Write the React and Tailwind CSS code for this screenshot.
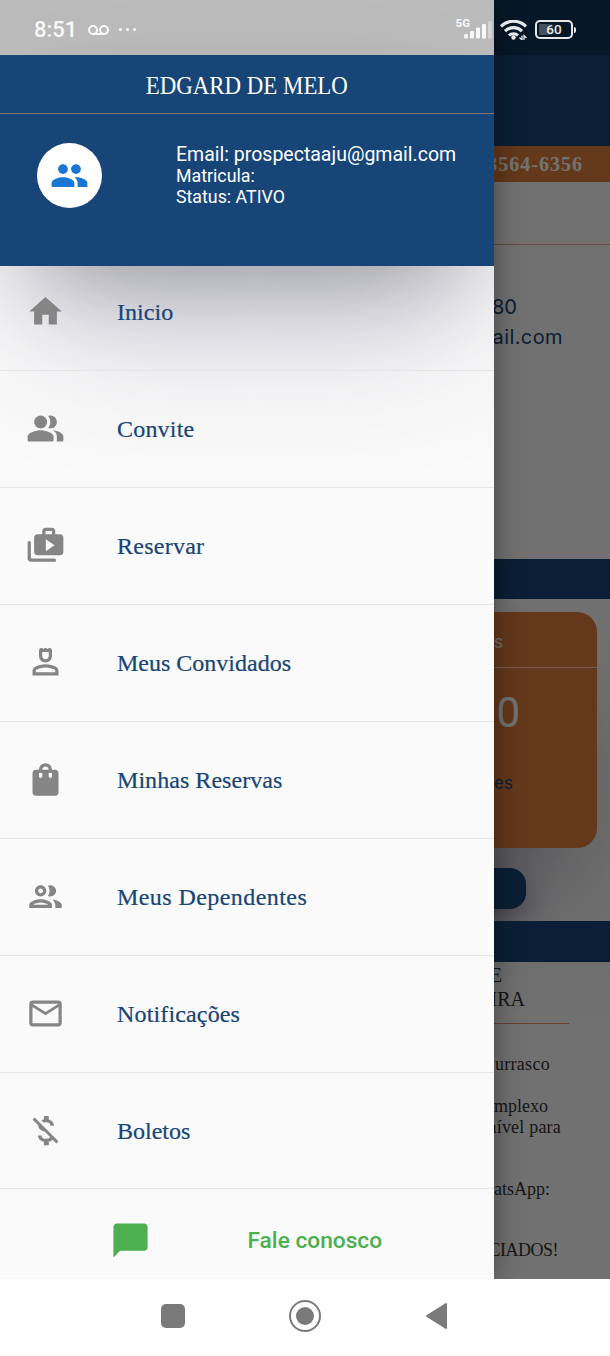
import React from 'react';
import {
  MdChatBubble,
  MdHome,
  MdMailOutline,
  MdMoneyOff,
  MdOutlinePeople,
  MdOutlinePerson4,
  MdPeople,
  MdShoppingBag,
} from 'react-icons/md';

// Rounded variants that the icon package doesn't ship
const PeopleRoundIcon = (props) => (
  <svg viewBox="0 0 24 24" fill="currentColor" {...props}>
    <circle cx="9" cy="8" r="4" />
    <path d="M16.67 13.13C18.04 14.06 19 15.32 19 17v2c0 .35-.07.69-.18 1H22c.55 0 1-.45 1-1v-2c0-2.18-3.57-3.47-6.33-3.87z" />
    <path d="M15 12c2.21 0 4-1.79 4-4s-1.79-4-4-4c-.47 0-.91.1-1.33.24a5.98 5.98 0 0 1 0 7.52c.42.14.86.24 1.33.24z" />
    <path d="M9 13c-2.67 0-8 1.34-8 4v2c0 .55.45 1 1 1h14c.55 0 1-.45 1-1v-2c0-2.66-5.33-4-8-4z" />
  </svg>
);

const ShopTwoIcon = (props) => (
  <svg viewBox="0 0 24 24" fill="currentColor" {...props}>
    <path d="M2 9.2c-.55 0-1 .45-1 1V20c0 1.1.9 2 2 2h14.5c.55 0 1-.45 1-1s-.45-1-1-1H4c-.55 0-1-.45-1-1v-8.8c0-.55-.45-1-1-1z" />
    <path
      fillRule="evenodd"
      d="M18 5V3c0-1.1-.9-2-2-2h-4c-1.1 0-2 .9-2 2v2H7c-1.1 0-2 .9-2 2v9c0 1.1.9 2 2 2h14c1.1 0 2-.9 2-2V7c0-1.1-.9-2-2-2h-3zM12 3h4v2h-4V3zM12.2 8.2v7.3l5.3-3.65-5.3-3.65z"
    />
  </svg>
);

const menuItems = [
  { label: 'Inicio', Icon: MdHome, tracking: 'tracking-[0.05px]' },
  { label: 'Convite', Icon: PeopleRoundIcon, tracking: 'tracking-[0.2px]' },
  { label: 'Reservar', Icon: ShopTwoIcon, tracking: 'tracking-[0.25px]' },
  { label: 'Meus Convidados', Icon: MdOutlinePerson4, tracking: 'tracking-normal' },
  { label: 'Minhas Reservas', Icon: MdShoppingBag, tracking: 'tracking-[0.05px]' },
  { label: 'Meus Dependentes', Icon: MdOutlinePeople, tracking: 'tracking-[0.43px]' },
  { label: 'Notificações', Icon: MdMailOutline, tracking: 'tracking-[0.15px]' },
  { label: 'Boletos', Icon: MdMoneyOff, tracking: 'tracking-normal' },
];

const StatusBar = () => (
  <div className="absolute inset-x-0 top-0 z-20 flex h-[55px] items-center bg-black/25 pt-1 pr-[34px] pl-[34px] text-white/90">
    <span className="font-['Roboto',sans-serif] text-[22px] font-medium">8:51</span>
    <svg className="ml-[11px] h-3 w-[21px]" viewBox="0 0 21 12" fill="none" stroke="currentColor" strokeWidth="2">
      <circle cx="5" cy="6" r="4" />
      <circle cx="16" cy="6" r="4" />
      <path d="M5 10h11" />
    </svg>
    <div className="ml-[10px] flex gap-1">
      <i className="h-[3px] w-[3px] rounded-full bg-white/90" />
      <i className="h-[3px] w-[3px] rounded-full bg-white/90" />
      <i className="h-[3px] w-[3px] rounded-full bg-white/90" />
    </div>

    <div className="ml-auto flex items-center">
      <span className="-mt-[12px] font-['Roboto',sans-serif] text-[11.5px] leading-none font-bold">5G</span>
      <svg className="-ml-[6px] h-[18px] w-[28px]" viewBox="0 0 28 18" fill="currentColor">
        <rect x="0" y="13" width="4" height="4.5" rx="1.5" />
        <rect x="6" y="10" width="4" height="7.5" rx="1" />
        <rect x="12" y="6.5" width="4" height="11" rx="1" />
        <rect x="18" y="3" width="4" height="14.5" rx="1" />
        <rect x="24" y="0" width="4" height="17.5" rx="1" opacity="0.4" />
      </svg>
      <svg className="ml-2 h-5 w-[27px]" viewBox="0 0 27 20" fill="none" stroke="currentColor" strokeWidth="3.1">
        <path d="M1 6.500a17.500 17.500 0 0 1 25 0" />
        <path d="M5 11.200a12 12 0 0 1 17 0" />
        <path d="M9 15.500a6.500 6.500 0 0 1 9 0" />
        <circle cx="13.5" cy="17.5" r="2.2" fill="currentColor" stroke="none" />
        <path d="M22 15.500v4.500l-2.500-2.500M24 20v-4.500l2.500 2.500" strokeWidth="1.3" />
      </svg>
      <div className="ml-2 flex items-center">
        <div className="flex h-[19px] w-[38px] items-center justify-center rounded-[5px] border-2 border-white/90 bg-[linear-gradient(90deg,#47515d_25%,transparent_55%)] bg-clip-content p-[2px] font-['Roboto',sans-serif] text-[13.5px] leading-none font-medium">
          60
        </div>
        <i className="ml-px h-[6px] w-[2px] rounded-r bg-white/90" />
      </div>
    </div>
  </div>
);

// Home screen that stays behind the open drawer
const HomeScreen = () => (
  <div className="flex h-full flex-col overflow-hidden bg-[#fafafa] text-right font-['Liberation_Serif',serif]">
    <div className="h-[146px] shrink-0 bg-[#184577]" />
    <div className="h-9 shrink-0 bg-[#dd7d3c] pr-[27px] text-xl leading-9 font-bold tracking-[1px] text-white">
      3564-6356
    </div>
    <div className="h-[63px] shrink-0 border-b border-[#dd7d3c]/70" />
    <div className="h-[314px] shrink-0 pt-[47px] font-['Inter',sans-serif] text-xl leading-[30px] text-[#184577]">
      <p className="pr-[93px]">80</p>
      <p className="pr-[47px] tracking-[0.4px]">gmail.com</p>
    </div>
    <div className="h-10 shrink-0 bg-[#184577]" />

    <div className="flex h-[322px] shrink-0 flex-col items-end pt-[13px] pr-[13px]">
      <div className="h-[236px] w-[280px] rounded-[20px] bg-[#dd7d3c] shadow-[0_78px_155px_-31px_rgba(50,50,93,0.25),0_47px_93px_-47px_rgba(0,0,0,0.3)]">
        <p className="h-14 border-b border-white/70 pr-[94px] font-['Inter',sans-serif] text-[17px] leading-[61px] text-white">s</p>
        <p className="pt-[21px] pr-[77px] font-['Roboto',sans-serif] text-[42px] leading-[48px] text-white">0</p>
        <p className="pt-[34px] pr-[84px] font-['Inter',sans-serif] text-[17px] leading-6 text-[#184577]">es</p>
      </div>
      <div className="mt-5 mr-[71px] h-[41px] w-[180px] rounded-[16px] bg-[#184577] shadow-[0_10px_30px_rgba(50,50,93,0.5)]" />
    </div>
    <div className="h-[41px] shrink-0 bg-[#184577]" />

    <div className="h-[61px] shrink-0 pt-px text-xl leading-6 text-[#333]">
      <p className="pr-[108px]">E</p>
      <p className="pr-[85px]">IRA</p>
    </div>
    <div className="mr-[41px] h-px w-[420px] shrink-0 self-end bg-[#dd7d3c]/80" />
    <div className="text-lg leading-[21px] text-[#333]">
      <p className="mt-[30px] pr-[60px] tracking-[0.3px]">churrasco</p>
      <p className="mt-[21px] pr-[62px]">complexo</p>
      <p className="pr-[49px] tracking-[0.2px]">disponível para</p>
      <p className="mt-[41px] pr-[60px]">WhatsApp:</p>
      <p className="mt-[40px] pr-[52px] tracking-[-0.5px]">ASSOCIADOS!</p>
    </div>
  </div>
);

const DrawerHeader = () => (
  <div className="relative z-10 h-[211px] shrink-0 bg-[#184577] text-white shadow-[0_78px_155px_-31px_rgba(50,50,93,0.28),0_47px_93px_-38px_rgba(0,0,0,0.3)]">
    <div className="flex h-[59px] items-center justify-center border-b border-[#85766b] pt-[3px]">
      <span className="inline-block scale-x-[0.88] font-['Liberation_Serif',serif] text-[26px] whitespace-nowrap">
        EDGARD DE MELO
      </span>
    </div>
    <div className="flex items-start pt-[29px] pl-[37px]">
      <div className="flex h-[65px] w-[65px] items-center justify-center rounded-full bg-white text-[#1976d2]">
        <MdPeople className="h-[39px] w-[39px]" />
      </div>
      <div className="ml-[74px] font-['Roboto',sans-serif] text-[17.8px] leading-[21.5px] whitespace-nowrap">
        <p className="pt-px -mb-px text-[19.5px]">Email: prospectaaju@gmail.com</p>
        <p>Matricula:</p>
        <p>Status: ATIVO</p>
      </div>
    </div>
  </div>
);

const MenuRow = ({ label, Icon, tracking }) => (
  <li className="flex h-[117px] shrink-0 items-center border-b border-[#e6e6e6] pl-[26px] first:h-[105px] first:pb-3 last:h-[116px]">
    <Icon className="-mt-px h-[39px] w-[39px] text-[#858585]" />
    <span
      className={`ml-[52px] font-['Liberation_Serif',serif] text-[24px] text-[#184577] [-webkit-text-stroke:0.22px_#184577] ${tracking}`}
    >
      {label}
    </span>
  </li>
);

const Drawer = () => (
  <div className="absolute inset-y-0 left-0 z-10 w-[494px] shadow-[0_0_28px_rgba(0,0,0,0.4)]">
    <div className="flex h-full flex-col overflow-hidden bg-[#fafafa] pt-[55px]">
      <DrawerHeader />
      <ul className="relative z-10 flex flex-col">
        {menuItems.map((item) => (
          <MenuRow key={item.label} {...item} />
        ))}
      </ul>
      <div className="flex h-[90px] items-center pt-[14px] pl-[110px] text-[#4caf50]">
        <MdChatBubble className="-mt-[2px] h-[41px] w-[41px]" />
        <span className="ml-[96.5px] font-['Roboto',sans-serif] text-[22.7px] font-medium">Fale conosco</span>
      </div>
    </div>
  </div>
);

const NavigationBar = () => (
  <div className="flex h-[77px] items-center bg-white pb-1 pl-[161px] text-[#7a7a7a]">
    <div className="h-6 w-6 rounded-[5px] bg-[#7a7a7a]" />
    <div className="ml-[104px] flex h-8 w-8 items-center justify-center rounded-full border-[2.5px] border-[#7a7a7a]">
      <div className="h-[18px] w-[18px] rounded-full bg-[#7a7a7a]" />
    </div>
    <svg className="ml-[104px] h-7 w-[23px]" viewBox="0 0 23 28" fill="currentColor" stroke="currentColor" strokeWidth="2" strokeLinejoin="round">
      <path d="M2 14 21 2v24z" />
    </svg>
  </div>
);

const App = () => (
  <div className="flex h-[1356px] w-[610px] flex-col overflow-hidden bg-white">
    <div className="relative h-[1279px] overflow-hidden">
      <HomeScreen />
      <div className="absolute inset-0 bg-black/55" />
      <Drawer />
      <StatusBar />
    </div>
    <NavigationBar />
  </div>
);

export default App;
